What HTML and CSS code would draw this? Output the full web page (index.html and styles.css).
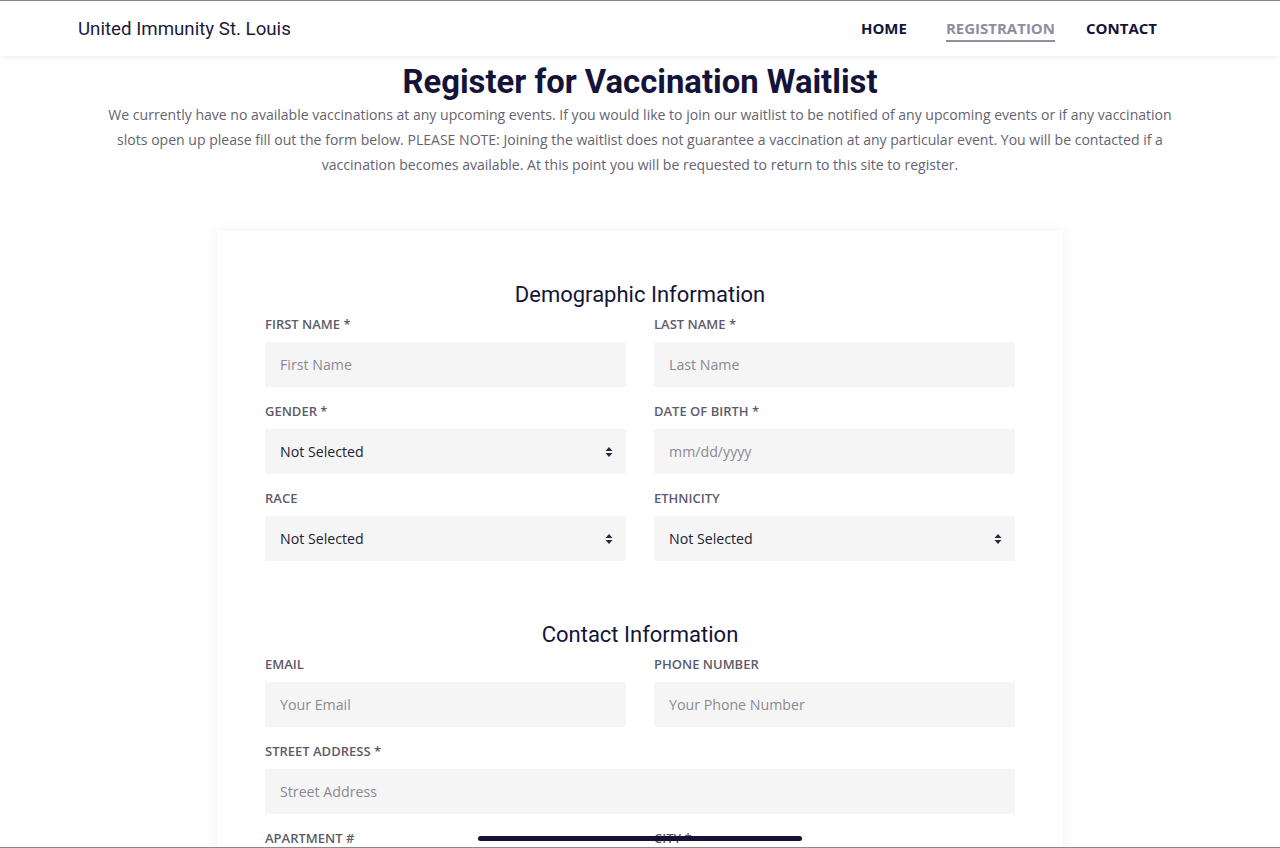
FILE: index.html
```html
<!DOCTYPE html>
<html lang="en">
<head>
<meta charset="utf-8">
<title>Register for Vaccination Waitlist</title>
<link rel="stylesheet" href="styles.css">
</head>
<body>
<header class="site-header">
  <a class="brand" href="#">United Immunity St. Louis</a>
  <nav class="nav">
    <a class="nav-link" href="#">HOME</a>
    <a class="nav-link active" href="#">REGISTRATION</a>
    <a class="nav-link" href="#">CONTACT</a>
  </nav>
</header>

<main class="page">
  <h1 class="title">Register for Vaccination Waitlist</h1>
  <p class="intro">We currently have no available vaccinations at any upcoming events. If you would like to join our waitlist to be notified of any upcoming events or if any vaccination slots open up please fill out the form below. PLEASE NOTE: Joining the waitlist does not guarantee a vaccination at any particular event. You will be contacted if a vaccination becomes available. At this point you will be requested to return to this site to register.</p>

  <form class="card">
    <h2 class="section-title">Demographic Information</h2>
    <div class="grid">
      <div class="field">
        <label class="label">FIRST NAME *</label>
        <input class="input" type="text" placeholder="First Name">
      </div>
      <div class="field">
        <label class="label">LAST NAME *</label>
        <input class="input" type="text" placeholder="Last Name">
      </div>
      <div class="field">
        <label class="label">GENDER *</label>
        <div class="select-wrap">
          <select class="input select"><option>Not Selected</option></select>
          <svg class="arrows" width="8" height="12" viewBox="0 0 8 12"><path d="M4 1 L7.5 5 H0.5 Z M4 11 L7.5 7 H0.5 Z" fill="#2a2940"/></svg>
        </div>
      </div>
      <div class="field">
        <label class="label">DATE OF BIRTH *</label>
        <input class="input" type="text" placeholder="mm/dd/yyyy">
      </div>
      <div class="field">
        <label class="label">RACE</label>
        <div class="select-wrap">
          <select class="input select"><option>Not Selected</option></select>
          <svg class="arrows" width="8" height="12" viewBox="0 0 8 12"><path d="M4 1 L7.5 5 H0.5 Z M4 11 L7.5 7 H0.5 Z" fill="#2a2940"/></svg>
        </div>
      </div>
      <div class="field">
        <label class="label">ETHNICITY</label>
        <div class="select-wrap">
          <select class="input select"><option>Not Selected</option></select>
          <svg class="arrows" width="8" height="12" viewBox="0 0 8 12"><path d="M4 1 L7.5 5 H0.5 Z M4 11 L7.5 7 H0.5 Z" fill="#2a2940"/></svg>
        </div>
      </div>
    </div>

    <h2 class="section-title second">Contact Information</h2>
    <div class="grid">
      <div class="field">
        <label class="label">EMAIL</label>
        <input class="input" type="text" placeholder="Your Email">
      </div>
      <div class="field">
        <label class="label">PHONE NUMBER</label>
        <input class="input" type="text" placeholder="Your Phone Number">
      </div>
      <div class="field full">
        <label class="label">STREET ADDRESS *</label>
        <input class="input" type="text" placeholder="Street Address">
      </div>
      <div class="field">
        <label class="label">APARTMENT #</label>
        <input class="input" type="text" placeholder="Apartment #">
      </div>
      <div class="field">
        <label class="label">CITY *</label>
        <input class="input" type="text" placeholder="City">
      </div>
    </div>
  </form>
</main>

<div class="frame"></div>
<div class="home-indicator"></div>
</body>
</html>
```

FILE: styles.css
```css
* { box-sizing: border-box; }

html, body {
  margin: 0;
  padding: 0;
  background: #ffffff;
  font-family: "Open Sans", "Liberation Sans", sans-serif;
  color: #5c5c6a;
}

.site-header {
  height: 56px;
  display: flex;
  align-items: center;
  justify-content: space-between;
  padding: 0 123px 0 78px;
  background: #fff;
  box-shadow: 0 2px 6px rgba(0, 0, 0, 0.07);
  position: relative;
  z-index: 2;
}

.brand {
  font-family: Roboto, "Liberation Sans", sans-serif;
  font-size: 18.7px;
  color: #1b1a3d;
  text-decoration: none;
  margin-top: 2px;
}

.nav {
  display: flex;
  align-items: center;
  gap: 31px;
}

.nav-link {
  font-weight: 700;
  font-size: 15px;
  color: #14133a;
  text-decoration: none;
  padding: 0 0 2px;
  border-bottom: 2px solid transparent;
  margin-top: 4px;
}
.nav-link.active {
  color: #8f8d9f;
  border-bottom-color: #8f8d9f;
}
.nav-link:first-child { margin-right: 8px; }

.page {
  padding: 6px 0 0;
  display: flex;
  flex-direction: column;
  align-items: center;
}

.title {
  font-family: Roboto, "Liberation Sans", sans-serif;
  font-weight: 700;
  font-size: 32.8px;
  line-height: 40px;
  color: #14133a;
  margin: 0;
}

.intro {
  max-width: 1080px;
  margin: 0;
  text-align: center;
  font-size: 14.05px;
  line-height: 25px;
  color: #666370;
}

.card {
  width: 846px;
  margin-top: 54px;
  padding: 49px 48px 40px;
  background: #fff;
  box-shadow: 0 0 14px rgba(0, 0, 0, 0.06);
}

.section-title {
  font-family: Roboto, "Liberation Sans", sans-serif;
  font-weight: 400;
  font-size: 22px;
  line-height: 30px;
  color: #14133a;
  text-align: center;
  margin: 0 0 6px;
}
.section-title.second { margin-top: 59px; }

.grid {
  display: grid;
  grid-template-columns: 1fr 1fr;
  column-gap: 28px;
  row-gap: 16px;
}

.field { display: flex; flex-direction: column; }
.field.full { grid-column: 1 / -1; }

.label {
  font-size: 13px;
  font-weight: 600;
  line-height: 16px;
  color: #5d5c69;
  margin-bottom: 10px;
}

.input {
  height: 45px;
  border: none;
  border-radius: 2px;
  background: #f5f5f5;
  padding: 0 15px;
  font-family: "Open Sans", "Liberation Sans", sans-serif;
  font-size: 14.2px;
  color: #222130;
  outline: none;
  width: 100%;
}
.input::placeholder { color: #8a8a93; }

.select-wrap { position: relative; }
.select {
  -webkit-appearance: none;
  appearance: none;
}
.arrows {
  position: absolute;
  right: 13px;
  top: 17px;
  pointer-events: none;
}

.frame {
  position: fixed;
  inset: 0;
  border-top: 1px solid #8a8a8a;
  border-bottom: 1px solid #8a8a8a;
  pointer-events: none;
  z-index: 10;
}

.home-indicator {
  position: fixed;
  left: 478px;
  width: 324px;
  bottom: 7px;
  height: 5px;
  border-radius: 3px;
  background: #141336;
  z-index: 11;
}
```
